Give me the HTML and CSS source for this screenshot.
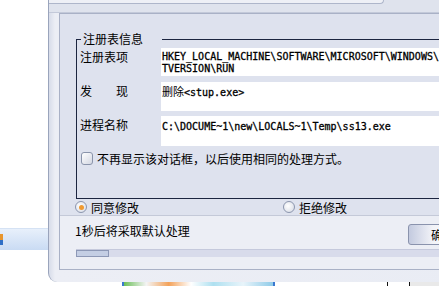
FILE: index.html
```html
<!DOCTYPE html>
<html lang="zh-CN">
<head>
    <meta charset="UTF-8">
    <title>注册表监控</title>
    <link rel="stylesheet" href="styles.css">
</head>
<body>
    <div class="screen">
        <div class="desk">
            <div class="task"><span class="task-icon"></span></div>
        </div>

        <div class="right">
            <div class="window">
                <div class="frame-top"><div class="frame-tab"></div></div>

                <div class="panel">
                    <div class="upper">
                        <fieldset class="group">
                            <legend>注册表信息</legend>
                            <div class="row row-1">
                                <span class="label">注册表项</span>
                                <div class="field">HKEY_LOCAL_MACHINE\SOFTWARE\MICROSOFT\WINDOWS\CURREN<br>TVERSION\RUN</div>
                            </div>
                            <div class="row row-2">
                                <span class="label">发　　现</span>
                                <div class="field"><span class="cn">删除</span>&lt;stup.exe&gt;</div>
                            </div>
                            <div class="row row-3">
                                <span class="label">进程名称</span>
                                <div class="field">C:\DOCUME~1\new\LOCALS~1\Temp\ss13.exe</div>
                            </div>
                            <label class="check"><span class="box"></span>不再显示该对话框，以后使用相同的处理方式。</label>
                        </fieldset>

                        <div class="choices">
                            <span class="radio radio-on"><span class="dot"></span>同意修改</span>
                            <span class="radio"><span class="dot"></span>拒绝修改</span>
                        </div>
                    </div>

                    <div class="lower">
                        <div class="count-row">
                            <span class="count-text">1秒后将采取默认处理</span>
                            <button class="btn">确定</button>
                        </div>
                        <div class="progress"><div class="progress-fill" style="width: 33px"></div></div>
                    </div>
                </div>
            </div>

            <!-- bout de bureau visible sous la fenêtre -->
            <div class="strip">
                <span class="strip-white"></span>
                <span class="strip-line"></span>
                <span class="strip-icons"></span>
                <span class="strip-line"></span>
                <span class="strip-gap"></span>
                <span class="strip-dark"></span>
                <span class="strip-gap2"></span>
                <span class="strip-dark"></span>
                <span class="strip-rest"></span>
            </div>
        </div>
    </div>
</body>
</html>
```

FILE: styles.css
```css
body {
    margin: 0;
    background: #fff;
    font-family: "Noto Sans CJK SC", sans-serif;
    font-size: 12px;
    color: #000;
    overflow: hidden;
}
.screen {
    display: flex;
    width: 439px;
    height: 286px;
    overflow: hidden;
}
.desk {
    width: 48px;
    flex-shrink: 0;
    padding-top: 228px;
}
.task {
    height: 22px;
    background: linear-gradient(#e8f0fb, #c9dbf3);
    border-top: 1px solid #d5e2f4;
    box-sizing: border-box;
    display: flex;
    align-items: center;
}
.task-icon {
    width: 3px;
    height: 11px;
    background: linear-gradient(#e8962e 50%, #2f6fc6 50%);
}
.right {
    flex-shrink: 0;
    width: 440px;
    display: flex;
    flex-direction: column;
}

/* fenetre */
.window {
    height: 282px;
    box-sizing: border-box;
    background: linear-gradient(90deg, #d7dce9, #eceef5 6px, #e9ecf4);
    border-left: 1px solid #9aa4bc;
    border-bottom-left-radius: 9px;
    padding: 0 0 12px 10px;
    display: flex;
    flex-direction: column;
}
.frame-top {
    height: 13px;
    border-bottom: 1px solid #c3c9d9;
    box-sizing: border-box;
    background: #dfe3ed;
    margin-left: -10px;
}
.frame-tab {
    width: 334px;
    height: 3px;
    background: #eef0f6;
    border-right: 1px solid #aeb6ca;
    border-bottom: 1px solid #aeb6ca;
    border-bottom-right-radius: 4px;
}
.panel {
    flex: 1;
    border: 1px solid #a9b1c6;
    border-right: none;
    display: flex;
    flex-direction: column;
    background: #dee2ee;
}
.upper {
    padding-top: 18px;
}
.group {
    margin: 0 0 0 16px;
    padding: 2px 0 33px 3px;
    border: 1px solid #1c2540;
    border-right: none;
    min-width: 0;
}
.group legend {
    margin-left: 1px;
    padding: 0 0 0 2px;
    width: 79px;
    line-height: 14px;
}
.row {
    display: flex;
    align-items: flex-start;
}
.label {
    width: 81px;
    flex-shrink: 0;
    line-height: 14px;
    padding-top: 2px;
}
.field {
    flex: 1;
    background: #fff;
    font-family: "DejaVu Sans Mono", monospace;
    font-size: 10px;
    line-height: 12px;
    -webkit-text-stroke: 0.3px #000;
    padding: 3px 0 0 1px;
    white-space: nowrap;
    overflow: hidden;
    box-sizing: border-box;
}
.field .cn {
    font-family: "Noto Sans CJK SC", sans-serif;
    font-size: 11px;
    -webkit-text-stroke: 0;
}
.row-1 .field { height: 28px; }
.row-2 { margin-top: 6px; }
.row-2 .field { height: 29px; }
.row-3 { margin-top: 5px; }
.row-3 .field { height: 30px; padding-top: 5px; }
.check {
    display: flex;
    align-items: center;
    gap: 4px;
    margin-top: 6px;
    padding-left: 1px;
    line-height: 13px;
}
.box {
    width: 10px;
    height: 11px;
    border: 1px solid #8a94ab;
    border-radius: 3px;
    background: linear-gradient(135deg, #fff, #d3d7e2);
}
.choices {
    display: flex;
    height: 16px;
    align-items: center;
    padding-left: 15px;
}
.radio {
    display: flex;
    align-items: center;
    gap: 4px;
}
.radio:first-child {
    width: 208px;
}
.dot {
    width: 10px;
    height: 10px;
    border: 1px solid #8c96ae;
    border-radius: 50%;
    background: radial-gradient(circle at 40% 40%, #fff, #d4d8e3);
    display: flex;
    align-items: center;
    justify-content: center;
}
.radio-on .dot::after {
    content: "";
    width: 5px;
    height: 5px;
    border-radius: 50%;
    background: #ef9a32;
}
.lower {
    flex: 1;
    border-top: 1px solid #c4c9d8;
    background: #eceef5;
    padding: 8px 0 0 15px;
}
.count-row {
    display: flex;
    align-items: flex-start;
    height: 21px;
}
.count-text {
    width: 333px;
    flex-shrink: 0;
    line-height: 14px;
}
.btn {
    width: 70px;
    height: 21px;
    border: 1px solid #8a93ad;
    border-radius: 3px;
    background: linear-gradient(90deg, #c3cadf, #f2f3f8 35%, #fff);
    font-family: "Noto Sans CJK SC", sans-serif;
    font-size: 12px;
    padding: 0;
}
.progress {
    margin: 4px 0 0 1px;
    height: 8px;
    background: #d8dbeb;
    border-top: 1px solid #c5c9dc;
    box-sizing: border-box;
}
.progress-fill {
    height: 7px;
    box-sizing: border-box;
    border: 1px solid #8d98b6;
    background: #c4cee4;
}

/* bureau */
.strip {
    height: 4px;
    display: flex;
    margin-left: -48px;
}
.strip-white { width: 122px; background: #fff; }
.strip-line { width: 2px; background: #3a78d0; }
.strip-icons {
    width: 149px;
    background: linear-gradient(90deg, #6cbf5a, #f4f4f4 15%, #f3a25a 30%, #fff 45%, #aee0f0 60%, #e8f4fa 80%, #8fcbe8);
}
.strip-gap { width: 112px; background: #fff; }
.strip-gap2 { width: 21px; background: #fff; }
.strip-dark { width: 1px; background: #111; }
.strip-rest { flex: 1; background: #e9e9e9; }
```
